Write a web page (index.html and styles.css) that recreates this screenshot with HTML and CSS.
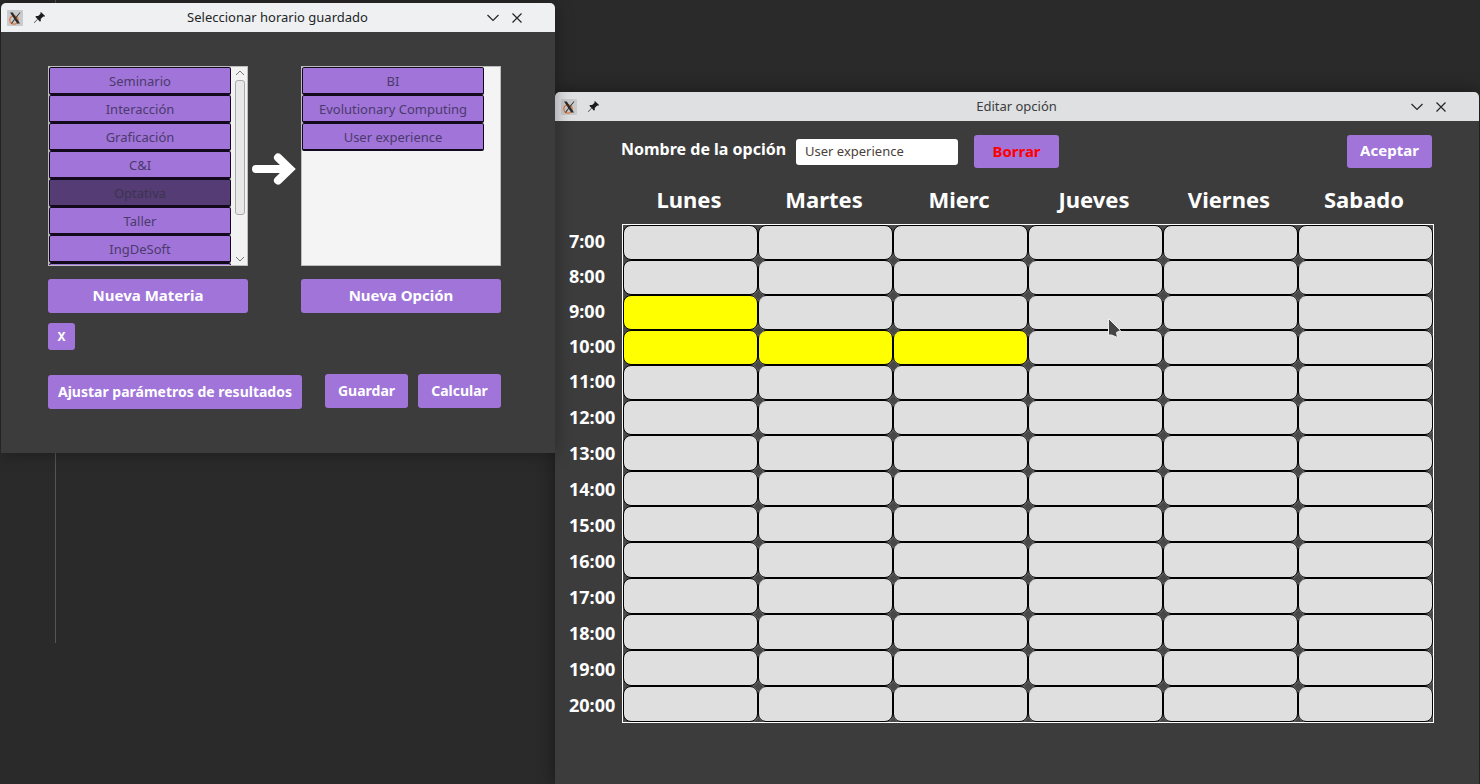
FILE: index.html
```html
<!DOCTYPE html>
<html lang="es">
<head>
<meta charset="utf-8">
<title>Horario</title>
<link rel="stylesheet" href="styles.css">
</head>
<body>
<div class="desktop">
  <div class="guide"></div>

  <section class="window win-edit">
    <header class="titlebar">
      <svg class="app-icon" viewBox="0 0 16 16"><rect width="16" height="16" rx="1" fill="#c9cacb"/><circle cx="7" cy="10" r="4.200" fill="none" stroke="#e0783c" stroke-width="1.300"/><path d="M3 2.500h2.800l7.200 11H10.200zM12.500 2.500h1L5 13.500H3.800z" fill="#2b2b2b"/></svg>
      <svg class="pin" viewBox="0 0 14 14"><path d="M8.500 1 13 5.500l-1 .6-1-.3L8.300 8.500l.2 2-1 1-2.300-2.500L1.500 12.800l-.4-.4 3.700-3.800L2.500 6.300l1-1 2 .2L8.200 3l-.3-1z" fill="#1c1c1c"/></svg>
      <span class="title">Editar opción</span>
      <svg class="ctl" viewBox="0 0 14 14"><path d="M1.500 4 7 9.500 12.500 4" fill="none" stroke="#232629" stroke-width="1.200"/></svg>
      <svg class="ctl" viewBox="0 0 14 14"><path d="M2.500 2.500l9 9M11.500 2.500l-9 9" fill="none" stroke="#232629" stroke-width="1.200"/></svg>
    </header>
    <div class="edit-body">
      <div class="edit-top">
        <label class="opt-label">Nombre de la opción</label>
        <div class="opt-input">User experience</div>
        <button class="btn btn-borrar">Borrar</button>
        <button class="btn btn-aceptar">Aceptar</button>
      </div>
      <div class="days">
        <span>Lunes</span><span>Martes</span><span>Mierc</span><span>Jueves</span><span>Viernes</span><span>Sabado</span>
      </div>
      <div class="schedule">
        <div class="hours">
          <span>7:00</span><span>8:00</span><span>9:00</span><span>10:00</span><span>11:00</span><span>12:00</span><span>13:00</span><span>14:00</span><span>15:00</span><span>16:00</span><span>17:00</span><span>18:00</span><span>19:00</span><span>20:00</span>
        </div>
        <div class="grid">
          <i></i><i></i><i></i><i></i><i></i><i></i>
          <i></i><i></i><i></i><i></i><i></i><i></i>
          <i class="on"></i><i></i><i></i><i></i><i></i><i></i>
          <i class="on"></i><i class="on"></i><i class="on"></i><i></i><i></i><i></i>
          <i></i><i></i><i></i><i></i><i></i><i></i>
          <i></i><i></i><i></i><i></i><i></i><i></i>
          <i></i><i></i><i></i><i></i><i></i><i></i>
          <i></i><i></i><i></i><i></i><i></i><i></i>
          <i></i><i></i><i></i><i></i><i></i><i></i>
          <i></i><i></i><i></i><i></i><i></i><i></i>
          <i></i><i></i><i></i><i></i><i></i><i></i>
          <i></i><i></i><i></i><i></i><i></i><i></i>
          <i></i><i></i><i></i><i></i><i></i><i></i>
          <i></i><i></i><i></i><i></i><i></i><i></i>
        </div>
      </div>
    </div>
    <svg class="cursor" viewBox="0 0 15 23"><path d="M1.500 1.500 13.500 13.500 9.500 15.500 10.500 20.500 4.500 18 1.500 18z" fill="#444" stroke="#eee" stroke-width="1"/></svg>
  </section>

  <section class="window win-select">
    <header class="titlebar">
      <svg class="app-icon" viewBox="0 0 16 16"><rect width="16" height="16" rx="1" fill="#c9cacb"/><circle cx="7" cy="10" r="4.200" fill="none" stroke="#e0783c" stroke-width="1.300"/><path d="M3 2.500h2.800l7.200 11H10.200zM12.500 2.500h1L5 13.500H3.800z" fill="#2b2b2b"/></svg>
      <svg class="pin" viewBox="0 0 14 14"><path d="M8.500 1 13 5.500l-1 .6-1-.3L8.300 8.500l.2 2-1 1-2.300-2.500L1.500 12.800l-.4-.4 3.700-3.800L2.500 6.300l1-1 2 .2L8.200 3l-.3-1z" fill="#1c1c1c"/></svg>
      <span class="title">Seleccionar horario guardado</span>
      <svg class="ctl" viewBox="0 0 14 14"><path d="M1.500 4 7 9.500 12.500 4" fill="none" stroke="#232629" stroke-width="1.200"/></svg>
      <svg class="ctl" viewBox="0 0 14 14"><path d="M2.500 2.500l9 9M11.500 2.500l-9 9" fill="none" stroke="#232629" stroke-width="1.200"/></svg>
    </header>
    <div class="select-body">
      <div class="lists">
        <div class="listbox">
          <div class="items">
            <div class="item">Seminario</div>
            <div class="item">Interacción</div>
            <div class="item">Graficación</div>
            <div class="item">C&amp;I</div>
            <div class="item selected">Optativa</div>
            <div class="item">Taller</div>
            <div class="item">IngDeSoft</div>
            <div class="item"></div>
          </div>
          <div class="scrollbar">
            <svg class="sb-arrow" viewBox="0 0 10 6"><path d="M1 5 5 1l4 4" fill="none" stroke="#777" stroke-width="1"/></svg>
            <div class="thumb"></div>
            <svg class="sb-arrow" viewBox="0 0 10 6"><path d="M1 1l4 4 4-4" fill="none" stroke="#777" stroke-width="1"/></svg>
          </div>
        </div>
        <svg class="arrow" viewBox="0 0 44 34"><path d="M4 16H36M26 4.500 38 16 26 27.500" fill="none" stroke="#fff" stroke-width="8" stroke-linecap="round" stroke-linejoin="miter"/></svg>
        <div class="listbox">
          <div class="items">
            <div class="item">BI</div>
            <div class="item">Evolutionary Computing</div>
            <div class="item">User experience</div>
          </div>
        </div>
      </div>
      <div class="add-row">
        <button class="btn btn-wide">Nueva Materia</button>
        <button class="btn btn-wide">Nueva Opción</button>
      </div>
      <button class="btn btn-x">X</button>
      <div class="actions">
        <button class="btn btn-params">Ajustar parámetros de resultados</button>
        <button class="btn btn-save">Guardar</button>
        <button class="btn btn-calc">Calcular</button>
      </div>
    </div>
  </section>
</div>
</body>
</html>
```

FILE: styles.css
```css
* { box-sizing: border-box; }
html, body { margin: 0; height: 100%; }
body { overflow: hidden; font-family: "Noto Sans", sans-serif; background: #2a2a2a; }

.desktop { position: relative; width: 1480px; height: 784px; overflow: hidden; }
.guide { position: absolute; left: 55px; top: 0; width: 1px; height: 643px; background: #555; }

.window { position: absolute; background: #3c3c3c; border-radius: 5px 5px 0 0; }
.win-select { left: 1px; top: 3px; width: 554px; height: 450px; z-index: 2; box-shadow: 0 0 18px rgba(0, 0, 0, .35); }
.win-edit { left: 555px; top: 92px; width: 924px; height: 692px; z-index: 1; box-shadow: 0 0 18px rgba(0, 0, 0, .45); }

.titlebar { display: flex; align-items: center; height: 29px; padding: 0 0 0 6px; background: #eff0f1; border-radius: 5px 5px 0 0; color: #232629; font-size: 13px; }
.win-edit .titlebar { background: #dee0e2; color: #3a3c3e; }
.app-icon { width: 16px; height: 16px; flex: none; }
.pin { width: 13px; height: 13px; margin-left: 10px; flex: none; }
.title { flex: 1; text-align: center; padding-left: 23px; margin-top: -1px; }
.ctl { width: 14px; height: 14px; flex: none; margin-right: 10px; }
.win-select .ctl:last-child, .win-edit .ctl:last-child { margin-right: 31px; }

.btn { display: block; border: 0; padding: 0 0 1px; background: #a074d9; color: #fff; font: 700 14px "Noto Sans", sans-serif; border-radius: 3px; }

/* selection window */
.select-body { padding: 34px 0 0 47px; }
.lists { display: flex; align-items: center; }
.listbox { display: flex; width: 200px; height: 200px; background: #f4f4f4; border: 1px solid #bdbdbd; overflow: hidden; }
.items { width: 182px; flex: none; }
.item { height: 28px; display: flex; align-items: center; justify-content: center; background: #a074d9; border: 1px solid #120a1c; border-bottom-width: 2px; border-radius: 2px; color: #4c3a6c; font-size: 13px; }
.item.selected { background: #553c74; color: #3c3450; }
.scrollbar { flex: 1; display: flex; flex-direction: column; align-items: center; padding: 3px 0 0 2px; background: #f2f2f2; }
.sb-arrow { width: 10px; height: 6px; flex: none; }
.thumb { width: 10px; height: 135px; margin: 4px 0 41px; background: #e8e8e8; border: 1px solid #a8a8a8; border-radius: 3px; }
.arrow { width: 44px; height: 34px; margin: 8px 5px 0 4px; flex: none; }

.add-row { display: flex; gap: 53px; margin-top: 13px; }
.btn-wide { width: 200px; height: 34px; font-size: 15px; padding-bottom: 3px; }
.btn-x { width: 27px; height: 27px; margin-top: 10px; font-size: 12px; }
.actions { display: flex; align-items: flex-start; margin-top: 24px; }
.btn-params { width: 254px; height: 34px; margin-top: 1px; }
.btn-save { width: 83px; height: 34px; margin-left: 23px; }
.btn-calc { width: 83px; height: 34px; margin-left: 10px; }

/* edit window */
.edit-body { padding-top: 14px; }
.edit-top { display: flex; align-items: center; padding-left: 66px; height: 33px; }
.opt-label { color: #fff; font-size: 16px; font-weight: 700; width: 175px; flex: none; margin-top: -6px; }
.opt-input { width: 162px; height: 26px; padding-left: 9px; line-height: 25px; background: #fff; border-radius: 3px; color: #4a3f3a; font-size: 13px; }
.btn-borrar { width: 85px; height: 33px; margin-left: 16px; color: #f00; font-size: 15px; }
.btn-aceptar { width: 85px; height: 33px; margin-left: 288px; font-size: 15px; padding-bottom: 3px; }

.days { display: grid; grid-template-columns: repeat(6, 135px); margin: 16px 0 0 66.500px; height: 40px; padding-bottom: 10px; align-items: center; color: #fff; font-size: 22px; font-weight: 700; text-align: center; }

.schedule { display: grid; grid-template-columns: 67px 812px; }
.hours { display: grid; grid-template-rows: repeat(5, 35px) repeat(9, 36px); color: #fff; font-size: 18px; font-weight: 700; padding-left: 14px; }
.hours span { line-height: 35px; }
.hours span:nth-child(n+6) { padding-top: 1px; }
.grid { display: grid; grid-template-columns: repeat(6, 135px); grid-template-rows: repeat(6, 35px) 36px 35px repeat(6, 36px); border: 1px solid #fff; height: 499px; background: #4a4a4a; overflow: hidden; }
.grid i { position: relative; display: block; background: #dfdfdf; border: 1px solid #000; border-radius: 8px; }
.grid i.on { background: #ffff00; }
.grid i::after { content: ""; position: absolute; right: -4.500px; bottom: -4.500px; width: 7px; height: 7px; z-index: 1; transform: rotate(45deg); background: #484848; box-shadow: 0 0 1px .5px #777; }

.cursor { position: absolute; left: 552px; top: 225px; width: 15px; height: 23px; }
```
